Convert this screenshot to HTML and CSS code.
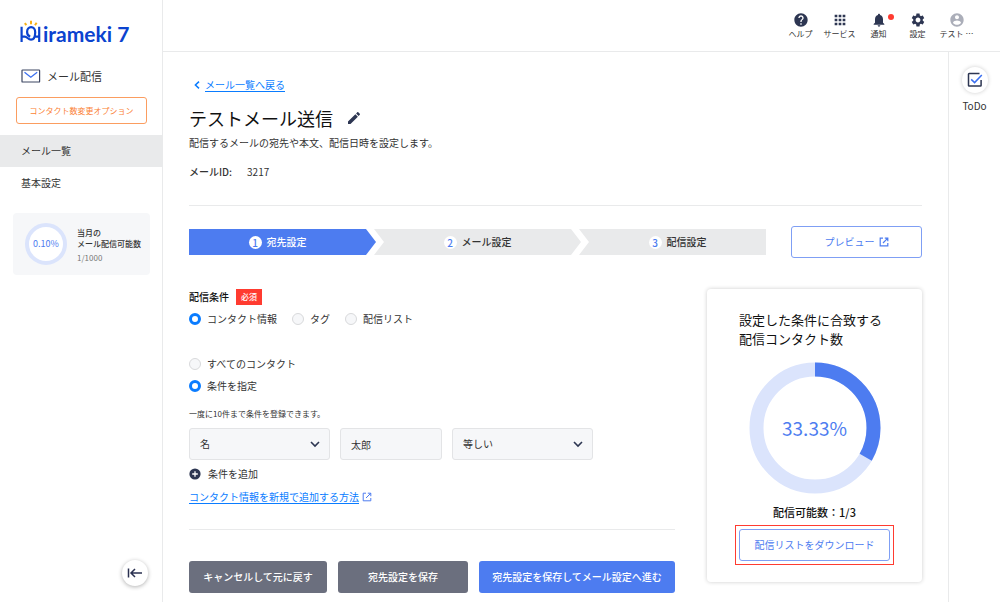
FILE: index.html
```html
<!DOCTYPE html>
<html lang="ja">
<head>
    <meta charset="UTF-8" />
    <meta name="viewport" content="width=device-width, initial-scale=1" />
    <title>テストメール送信 - Hirameki 7</title>
    <link rel="stylesheet" href="styles.css">
</head>
<body>
    <aside class="sidebar">
        <a class="logo" href="#">
            <svg class="logo-mark" width="24" height="24" viewBox="0 0 24 24" fill="none">
                <path d="M2.6 6.8V22M2.6 16.6H5.8C8.2 16.6 9 19.6 12 19.6C15.2 19.6 16.2 16 16.2 12.2C16.2 9.2 14.4 7.2 12.1 7.2C9.8 7.2 8.1 9.2 8.1 12C8.1 14.4 9.2 16 11.2 16.6M15.6 16.6H20.2M20.2 6.8V22" stroke="#0b43cf" stroke-width="2.2" />
                <path d="M7.4 5.2L5.8 3.2M12 4.2V0.8M16 5.2L17.6 2.8" stroke="#f9b115" stroke-width="2" />
            </svg>
            <span class="logo-text">irameki 7</span>
        </a>
        <div class="service">
            <svg width="20" height="14" viewBox="0 0 20 14" fill="none">
                <rect x="1" y="1" width="17.6" height="12" rx="0.6" stroke="#3d4663" stroke-width="1.2" />
                <path d="M3.5 3.2L9.8 8.2L16.2 3.2" stroke="#3b6ff0" stroke-width="1.3" />
            </svg>
            <span>メール配信</span>
        </div>
        <button class="btn-option" type="button">コンタクト数変更オプション</button>
        <nav class="menu">
            <a class="menu-item active" href="#">メール一覧</a>
            <a class="menu-item" href="#">基本設定</a>
        </nav>
        <div class="quota">
            <div class="quota-ring">0.10%</div>
            <div class="quota-info">
                <div class="quota-title">当月の<br>メール配信可能数</div>
                <div class="quota-count">1/1000</div>
            </div>
        </div>
        <button class="collapse" type="button" aria-label="メニューを閉じる">
            <svg width="16" height="12" viewBox="0 0 16 12" fill="none" stroke="#2a3050" stroke-width="1.5">
                <path d="M1.5 1.5V10.5M15 6H4M8 2L4 6L8 10" />
            </svg>
        </button>
    </aside>

    <div class="page">
        <header class="header">
            <a class="header-item" href="#">
                <svg width="16" height="16" viewBox="0 0 24 24" fill="#2d3652"><path d="M12 2C6.48 2 2 6.48 2 12s4.48 10 10 10 10-4.48 10-10S17.52 2 12 2zm1 17h-2v-2h2v2zm2.07-7.75l-.9.92C13.45 12.9 13 13.5 13 15h-2v-.5c0-1.1.45-2.1 1.17-2.83l1.24-1.26c.37-.36.59-.86.59-1.41 0-1.1-.9-2-2-2s-2 .9-2 2H8c0-2.21 1.79-4 4-4s4 1.79 4 4c0 .88-.36 1.68-.93 2.25z" /></svg>
                <span>ヘルプ</span>
            </a>
            <a class="header-item" href="#">
                <svg width="16" height="16" viewBox="0 0 24 24" fill="#2d3652"><path d="M4 8h4V4H4v4zm6 12h4v-4h-4v4zm-6 0h4v-4H4v4zm0-6h4v-4H4v4zm6 0h4v-4h-4v4zm6-10v4h4V4h-4zm-6 4h4V4h-4v4zm6 6h4v-4h-4v4zm0 6h4v-4h-4v4z" /></svg>
                <span>サービス</span>
            </a>
            <a class="header-item" href="#">
                <svg width="16" height="16" viewBox="0 0 24 24" fill="#2d3652"><path d="M12 22c1.1 0 2-.9 2-2h-4c0 1.1.89 2 2 2zm6-6v-5c0-3.07-1.64-5.64-4.5-6.32V4c0-.83-.67-1.5-1.5-1.5s-1.5.67-1.5 1.5v.68C7.63 5.36 6 7.92 6 11v5l-2 2v1h16v-1l-2-2z" /></svg>
                <span>通知</span>
                <i class="dot"></i>
            </a>
            <a class="header-item" href="#">
                <svg width="16" height="16" viewBox="0 0 24 24" fill="#2d3652"><path d="M19.14 12.94c.04-.3.06-.61.06-.94 0-.32-.02-.64-.07-.94l2.03-1.58c.18-.14.23-.41.12-.61l-1.92-3.32c-.12-.22-.37-.29-.59-.22l-2.39.96c-.5-.38-1.03-.7-1.62-.94l-.36-2.54c-.04-.24-.24-.41-.48-.41h-3.84c-.24 0-.43.17-.47.41l-.36 2.54c-.59.24-1.13.57-1.62.94l-2.39-.96c-.22-.08-.47 0-.59.22L2.74 8.87c-.12.21-.08.47.12.61l2.03 1.58c-.05.3-.09.63-.09.94s.02.64.07.94l-2.03 1.58c-.18.14-.23.41-.12.61l1.92 3.32c.12.22.37.29.59.22l2.39-.96c.5.38 1.03.7 1.62.94l.36 2.54c.05.24.24.41.48.41h3.84c.24 0 .44-.17.47-.41l.36-2.54c.59-.24 1.13-.56 1.62-.94l2.39.96c.22.08.47 0 .59-.22l1.92-3.32c.12-.22.07-.47-.12-.61l-2.01-1.58zM12 15.6c-1.98 0-3.6-1.62-3.6-3.6s1.62-3.6 3.6-3.6 3.6 1.62 3.6 3.6-1.62 3.6-3.6 3.6z" /></svg>
                <span>設定</span>
            </a>
            <a class="header-item" href="#">
                <svg width="16" height="16" viewBox="0 0 24 24" fill="#abaeb9"><path d="M12 2C6.48 2 2 6.48 2 12s4.48 10 10 10 10-4.48 10-10S17.52 2 12 2zm0 3c1.66 0 3 1.34 3 3s-1.34 3-3 3-3-1.34-3-3 1.34-3 3-3zm0 14.2c-2.5 0-4.71-1.28-6-3.22.03-1.99 4-3.08 6-3.08 1.99 0 5.97 1.09 6 3.08-1.29 1.94-3.5 3.22-6 3.22z" /></svg>
                <span>テスト …</span>
            </a>
        </header>

        <div class="body">
            <main class="main">
                <div class="back">
                    <svg width="8" height="8" viewBox="0 0 8 8" fill="none" stroke="#0a7cff" stroke-width="1.5"><path d="M6 0.6L2.4 4L6 7.4" /></svg>
                    <a class="link" href="#">メール一覧へ戻る</a>
                </div>
                <div class="title">
                    <h1>テストメール送信</h1>
                    <button class="icon-btn" type="button" aria-label="編集">
                        <svg width="16" height="16" viewBox="0 0 24 24" fill="#2d3652"><path d="M3 17.25V21h3.75L17.81 9.94l-3.75-3.75L3 17.25zM20.71 7.04c.39-.39.39-1.02 0-1.41l-2.34-2.34c-.39-.39-1.02-.39-1.41 0l-1.83 1.83 3.75 3.75 1.83-1.83z" /></svg>
                    </button>
                </div>
                <p class="lead">配信するメールの宛先や本文、配信日時を設定します。</p>
                <dl class="mail-id">
                    <dt>メールID:</dt>
                    <dd>3217</dd>
                </dl>

                <div class="step-row">
                    <ol class="steps">
                        <li class="step current"><span class="num">1</span>宛先設定</li>
                        <li class="step"><span class="num">2</span>メール設定</li>
                        <li class="step"><span class="num">3</span>配信設定</li>
                    </ol>
                    <button class="btn-outline btn-preview" type="button">プレビュー
                        <svg width="10" height="10" viewBox="0 0 10 10" fill="none" stroke="#4d7cf0" stroke-width="1.2"><path d="M4 1.2H1.2V8.8H8.8V6M5.8 1.2H8.8V4.2M8.8 1.2L4 6" /></svg>
                    </button>
                </div>

                <div class="columns">
                    <form class="form">
                        <div class="form-title">配信条件<span class="badge">必須</span></div>
                        <div class="radios">
                            <label class="radio"><input type="radio" name="target" checked>コンタクト情報</label>
                            <label class="radio"><input type="radio" name="target">タグ</label>
                            <label class="radio"><input type="radio" name="target">配信リスト</label>
                        </div>
                        <div class="radios vertical">
                            <label class="radio"><input type="radio" name="scope">すべてのコンタクト</label>
                            <label class="radio"><input type="radio" name="scope" checked>条件を指定</label>
                        </div>
                        <p class="note">一度に10件まで条件を登録できます。</p>
                        <div class="conditions">
                            <div class="select">
                                <select aria-label="項目"><option>名</option></select>
                                <svg width="10" height="8" viewBox="0 0 10 8" fill="none" stroke="#2d3652" stroke-width="1.6"><path d="M1 2L5 6L9 2" /></svg>
                            </div>
                            <input class="text" type="text" aria-label="値" value="太郎">
                            <div class="select">
                                <select aria-label="比較"><option>等しい</option></select>
                                <svg width="10" height="8" viewBox="0 0 10 8" fill="none" stroke="#2d3652" stroke-width="1.6"><path d="M1 2L5 6L9 2" /></svg>
                            </div>
                        </div>
                        <button class="add" type="button">
                            <svg width="12" height="12" viewBox="0 0 12 12"><circle cx="6" cy="6" r="5.6" fill="#2d3652" /><path d="M6 3.2V8.8M3.2 6H8.8" stroke="#fff" stroke-width="1.3" /></svg>
                            条件を追加
                        </button>
                        <div class="howto">
                            <a class="link" href="#">コンタクト情報を新規で追加する方法</a>
                            <svg width="10" height="10" viewBox="0 0 10 10" fill="none" stroke="#4d7cf0" stroke-width="1"><path d="M4 1.2H1.2V8.8H8.8V6M5.8 1.2H8.8V4.2M8.8 1.2L4 6" /></svg>
                        </div>
                        <div class="actions">
                            <button class="btn" type="button">キャンセルして元に戻す</button>
                            <button class="btn" type="button">宛先設定を保存</button>
                            <button class="btn primary" type="submit">宛先設定を保存してメール設定へ進む</button>
                        </div>
                    </form>

                    <section class="card">
                        <h2>設定した条件に合致する<br>配信コンタクト数</h2>
                        <div class="chart">
                            <svg width="132" height="132" viewBox="0 0 132 132" fill="none" stroke-width="14">
                                <circle cx="66" cy="66" r="58.5" stroke="#dbe4fc" />
                                <circle cx="66" cy="66" r="58.5" stroke="#4d7cf0" pathLength="100" stroke-dasharray="33.33 66.67" transform="rotate(-90 66 66)" />
                            </svg>
                            <span class="chart-value">33.33%</span>
                        </div>
                        <p class="card-count">配信可能数：1/3</p>
                        <div class="highlight">
                            <button class="btn-outline" type="button">配信リストをダウンロード</button>
                        </div>
                    </section>
                </div>
            </main>

            <aside class="todo">
                <button class="todo-btn" type="button" aria-label="ToDo">
                    <svg width="16" height="16" viewBox="0 0 16 16" fill="none" stroke-width="1.5">
                        <path d="M12.5 1.5H2.2Q1.5 1.5 1.5 2.2V13.4Q1.5 14.1 2.2 14.1H13.4Q14.1 14.1 14.1 13.4V8" stroke="#2d3652" />
                        <path d="M4.2 7.4L7.6 10.6L14.8 3" stroke="#3b6ff0" />
                    </svg>
                </button>
                <span>ToDo</span>
            </aside>
        </div>
    </div>
</body>
</html>
```

FILE: styles.css
```css
* {
    box-sizing: border-box;
}
body {
    margin: 0;
    min-height: 100vh;
    display: flex;
    background: #fff;
    color: #333;
    font-family: "Noto Sans CJK JP", sans-serif;
    font-size: 10px;
    line-height: 16px;
}
h1, h2, p, dl, dd, ol {
    margin: 0;
    padding: 0;
    font-weight: 400;
}
a {
    color: inherit;
    text-decoration: none;
}
button, input, select {
    margin: 0;
    font: inherit;
    color: inherit;
}
button {
    padding: 0;
    border: none;
    background: none;
    white-space: nowrap;
}
svg {
    display: block;
    flex: none;
}
.link {
    color: #0a7cff;
    text-decoration: underline;
    text-underline-offset: 2px;
}

/* sidebar */
.sidebar {
    width: 163px;
    flex: none;
    display: flex;
    flex-direction: column;
    padding: 20px 0 16px;
    border-right: 1px solid #e9eaeb;
}
.logo {
    display: flex;
    align-items: flex-start;
    height: 24px;
    padding-left: 19px;
}
.logo-text {
    color: #0b43cf;
    font-family: Lato, sans-serif;
    font-size: 21px;
    font-weight: 700;
    line-height: 28px;
}
.service {
    display: flex;
    align-items: center;
    gap: 6px;
    margin-top: 24px;
    padding-left: 21px;
    font-size: 11px;
}
.btn-option {
    height: 27px;
    margin: 13px 15px 0 16px;
    border: 1px solid #fb9d60;
    border-radius: 3px;
    color: #fb7f35;
    font-size: 8px;
}
.menu {
    display: flex;
    flex-direction: column;
    margin-top: 11px;
}
.menu-item {
    padding: 8px 21px;
}
.menu-item.active {
    background: #e9eaeb;
}
.quota {
    display: flex;
    align-items: center;
    gap: 10px;
    margin: 14px 12px 0 13px;
    padding: 10px 12px;
    border-radius: 4px;
    background: #f6f7f9;
}
.quota-ring {
    flex: none;
    width: 42px;
    height: 42px;
    display: flex;
    align-items: center;
    justify-content: center;
    border: 4px solid #dbe4fc;
    border-radius: 50%;
    background: #fff;
    color: #4d7cf0;
    font-size: 9px;
}
.quota-info {
    padding-top: 3px;
    font-size: 8px;
    white-space: nowrap;
}
.quota-title {
    font-weight: 500;
    line-height: 11px;
}
.quota-count {
    margin-top: 3px;
    color: #777;
    line-height: 12px;
}
.collapse {
    width: 26px;
    height: 26px;
    margin: auto 0 0 122px;
    display: flex;
    align-items: center;
    justify-content: center;
    border-radius: 50%;
    background: #fff;
    box-shadow: 0 1px 4px rgba(0,0,0,0.3);
}

/* header */
.page {
    flex: 1;
    min-width: 0;
    display: flex;
    flex-direction: column;
}
.header {
    height: 52px;
    flex: none;
    display: flex;
    justify-content: flex-end;
    padding: 12px 24px 0 0;
    border-bottom: 1px solid #e9eaeb;
}
.header-item {
    position: relative;
    width: 39px;
    display: flex;
    flex-direction: column;
    align-items: center;
    font-size: 8px;
    line-height: 12px;
    white-space: nowrap;
}
.dot {
    position: absolute;
    top: 2px;
    right: 4px;
    width: 6px;
    height: 6px;
    border-radius: 50%;
    background: #ff3b30;
}
.body {
    flex: 1;
    display: flex;
}
.todo {
    width: 52px;
    flex: none;
    display: flex;
    flex-direction: column;
    align-items: center;
    gap: 5px;
    padding-top: 15px;
    border-left: 1px solid #e9eaeb;
}
.todo-btn {
    width: 26px;
    height: 26px;
    display: flex;
    align-items: center;
    justify-content: center;
    border-radius: 50%;
    background: #fff;
    box-shadow: 0 0 4px rgba(0,0,0,0.2);
}

/* main */
.main {
    flex: 1;
    min-width: 0;
    padding: 25px 26px 8px;
}
.back {
    display: flex;
    align-items: center;
    gap: 4px;
    padding-left: 4px;
}
.title {
    display: flex;
    align-items: center;
    gap: 13px;
    margin-top: 12px;
}
.title h1 {
    color: #111;
    font-size: 18px;
    line-height: 26px;
}
.lead {
    margin-top: 4px;
}
.mail-id {
    display: flex;
    gap: 15px;
    margin-top: 13px;
    padding-bottom: 25px;
    border-bottom: 1px solid #e9eaeb;
}
.mail-id dt {
    font-weight: 500;
}
.step-row {
    display: flex;
    align-items: center;
    gap: 25px;
    margin-top: 20px;
}
.steps {
    flex: 1;
    display: flex;
    list-style: none;
}
/* arrow-shaped steps, each one tucked into the notch of the next */
.step {
    box-sizing: content-box;
    flex: 1 1 0;
    height: 26px;
    display: flex;
    align-items: center;
    justify-content: center;
    gap: 5px;
    background: #e9eaeb;
    font-weight: 500;
    clip-path: polygon(0 0, calc(100% - 10px) 0, 100% 50%, calc(100% - 10px) 100%, 0 100%, 10px 50%);
    padding: 0 15px;
    margin-left: -2px;
}
.step:first-child {
    margin-left: 0;
    padding: 0 10px 0 0;
    clip-path: polygon(0 0, calc(100% - 10px) 0, 100% 50%, calc(100% - 10px) 100%, 0 100%);
}
.step:last-child {
    padding: 0 0 0 10px;
    clip-path: polygon(0 0, 100% 0, 100% 100%, 0 100%, 10px 50%);
}
.step.current {
    background: #4d7cf0;
    color: #fff;
}
.num {
    width: 13px;
    height: 13px;
    border-radius: 50%;
    background: #fff;
    color: #4d7cf0;
    line-height: 13px;
    text-align: center;
}
.btn-outline {
    height: 32px;
    display: flex;
    align-items: center;
    justify-content: center;
    gap: 4px;
    border: 1px solid #7f9ff4;
    border-radius: 3px;
    background: #fff;
    color: #4d7cf0;
}
.btn-preview {
    width: 131px;
}
.columns {
    display: flex;
    align-items: flex-start;
    gap: 32px;
    margin-top: 31px;
}

/* form */
.form {
    flex: 1;
}
.form-title {
    display: flex;
    align-items: center;
    gap: 7px;
    color: #111;
    font-weight: 500;
}
.badge {
    padding: 0 5px;
    background: #ff3b30;
    color: #fff;
    font-size: 8px;
}
.radios {
    display: flex;
    gap: 15px;
    margin-top: 6px;
}
.radios.vertical {
    flex-direction: column;
    gap: 6px;
    margin-top: 29px;
}
.radio {
    display: flex;
    align-items: center;
    gap: 6px;
}
.radio input {
    appearance: none;
    width: 12px;
    height: 12px;
    border: 1px solid #d8d9db;
    border-radius: 50%;
    background: #f6f7f9;
}
.radio input:checked {
    border: 3px solid #0a7cff;
    background: #fff;
}
.note {
    margin-top: 12px;
    font-size: 8px;
}
.conditions {
    display: flex;
    gap: 10px;
    margin-top: 6px;
}
.select {
    position: relative;
}
.select select, .text {
    width: 141px;
    height: 32px;
    padding: 0 10px;
    border: 1px solid #e3e4e6;
    border-radius: 3px;
    background: #f6f7f9;
}
.select select {
    appearance: none;
}
.select svg {
    position: absolute;
    top: 12px;
    right: 10px;
    pointer-events: none;
}
.text {
    width: 102px;
}
.add {
    display: flex;
    align-items: center;
    gap: 7px;
    margin-top: 6px;
}
.howto {
    display: flex;
    align-items: center;
    gap: 3px;
    margin-top: 7px;
    padding-bottom: 24px;
    border-bottom: 1px solid #e9eaeb;
}
.actions {
    display: flex;
    gap: 11px;
    margin-top: 31px;
}
.btn {
    flex: 1 0 128px;
    height: 32px;
    padding: 0 13px;
    border-radius: 3px;
    background: #6b6f7e;
    color: #fff;
    font-weight: 500;
}
.btn:first-child {
    flex-basis: 136px;
}
.btn.primary {
    flex-basis: 194px;
    background: #4d7cf0;
}

/* card */
.card {
    width: 215px;
    flex: none;
    display: flex;
    flex-direction: column;
    align-items: center;
    padding: 21px 28px 17px;
    border-radius: 4px;
    box-shadow: 0 0 4px rgba(0,0,0,0.2);
    color: #111;
}
.card h2 {
    align-self: flex-start;
    padding-left: 4px;
    font-size: 13px;
    line-height: 19px;
    white-space: nowrap;
}
.chart {
    display: grid;
    place-items: center;
    margin-top: 14px;
}
.chart svg, .chart-value {
    grid-area: 1 / 1;
}
.chart-value {
    color: #4d7cf0;
    font-size: 19px;
}
.card-count {
    margin: 10px 0 5px;
    font-size: 11px;
    font-weight: 500;
}
.highlight {
    align-self: stretch;
    padding: 3px;
    border: 1px solid #ff3b30;
}
.highlight .btn-outline {
    width: 100%;
}
```
